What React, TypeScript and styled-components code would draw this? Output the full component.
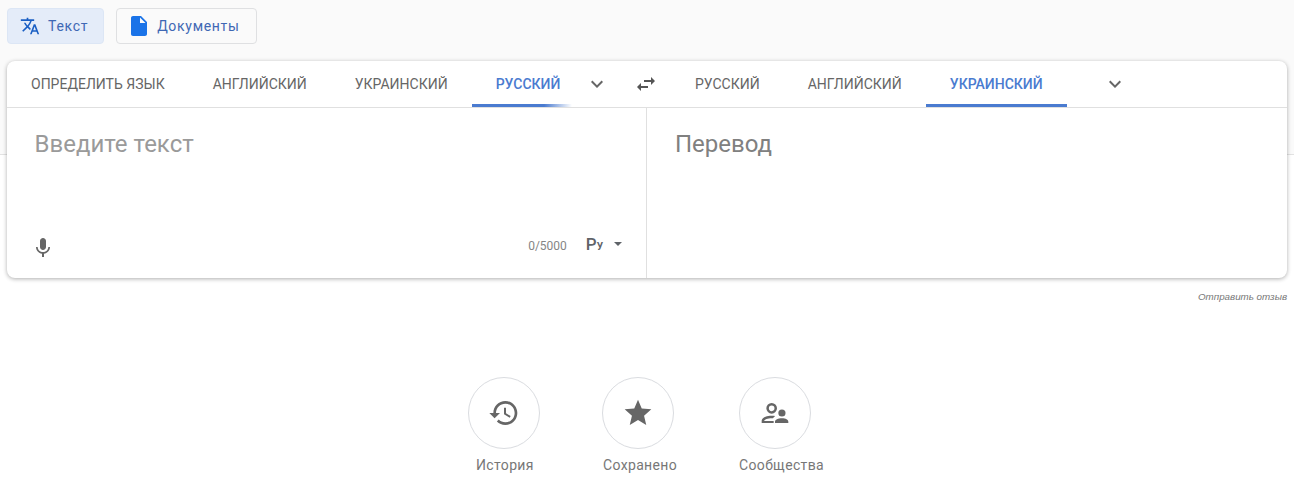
import React from 'react'
import styled, { createGlobalStyle } from 'styled-components'

const GlobalStyle = createGlobalStyle`
  html, body {
    margin: 0;
    padding: 0;
    background: #fff;
    font-family: Roboto, 'Noto Sans', sans-serif;
  }
`

const Icon = ({ d, size = 24, color = '#5f6368' }: { d: string; size?: number; color?: string }) => (
  <svg width={size} height={size} viewBox="0 0 24 24" fill={color}>
    <path d={d} />
  </svg>
)

const paths = {
  translate:
    'M12.87 15.07l-2.54-2.51.03-.03c1.74-1.94 2.98-4.17 3.71-6.53H17V4h-7V2H8v2H1v1.99h11.17C11.5 7.92 10.44 9.75 9 11.35 8.07 10.32 7.3 9.19 6.69 8h-2c.73 1.63 1.73 3.17 2.98 4.56l-5.09 5.02L4 19l5-5 3.11 3.11.76-2.04zM18.5 10h-2L12 22h2l1.12-3h4.75L21 22h2l-4.5-12zm-2.62 7l1.62-4.33L19.12 17h-3.24z',
  file: 'M6 2c-1.1 0-1.99.9-1.99 2L4 20c0 1.1.89 2 1.99 2H18c1.1 0 2-.9 2-2V8l-6-6H6zm7 7V3.5L18.5 9H13z',
  swap: 'M6.99 11L3 15l3.99 4v-3H14v-2H6.99v-3zM21 9l-3.99-4v3H10v2h7.01v3L21 9z',
  expand: 'M16.59 8.59L12 13.17 7.41 8.59 6 10l6 6 6-6z',
  mic: 'M12 14c1.66 0 3-1.34 3-3V5c0-1.66-1.34-3-3-3S9 3.34 9 5v6c0 1.66 1.34 3 3 3zm5.3-3c0 3-2.54 5.1-5.3 5.1S6.7 14 6.7 11H5c0 3.41 2.72 6.23 6 6.72V21h2v-3.28c3.28-.48 6-3.3 6-6.72h-1.7z',
  history:
    'M13 3c-4.97 0-9 4.03-9 9H1l3.89 3.89.07.14L9 12H6c0-3.87 3.13-7 7-7s7 3.13 7 7-3.13 7-7 7c-1.93 0-3.68-.79-4.94-2.06l-1.42 1.42C8.27 19.99 10.51 21 13 21c4.97 0 9-4.03 9-9s-4.03-9-9-9zm-1 5v5l4.28 2.54.72-1.21-3.5-2.08V8H12z',
  star: 'M12 17.27L18.18 21l-1.64-7.03L22 9.24l-7.19-.61L12 2 9.19 8.63 2 9.24l5.46 4.73L5.82 21z',
  community:
    'M9.5 4.5a4 4 0 1 1 0 8 4 4 0 0 1 0-8zm0 1.9a2.1 2.1 0 1 0 0 4.2 2.1 2.1 0 0 0 0-4.2zM2 19.5v-1.7c0-2.3 3.4-3.8 7.5-3.8.9 0 1.8.1 2.6.2l-1.7 1.8c-.3 0-.6-.1-.9-.1-2.9 0-5.6 1-5.6 2v.1h7.1v1.5H2zM17.2 9.3a2.7 2.7 0 1 1 0 5.4 2.7 2.7 0 0 1 0-5.4zM12 19.5v-1c0-1.6 2.3-2.6 5.2-2.6s4.8 1 4.8 2.6v1H12z',
}

const sourceTabs = ['ОПРЕДЕЛИТЬ ЯЗЫК', 'АНГЛИЙСКИЙ', 'УКРАИНСКИЙ', 'РУССКИЙ']
const targetTabs = ['РУССКИЙ', 'АНГЛИЙСКИЙ', 'УКРАИНСКИЙ']

const App = () => {
  return (
    <Page>
      <GlobalStyle />
      <ModeBar>
        <ModeButton $active>
          <Icon d={paths.translate} size={20} color="#1a5fc4" />
          Текст
        </ModeButton>
        <ModeButton>
          <Icon d={paths.file} size={24} color="#1a73e8" />
          Документы
        </ModeButton>
      </ModeBar>

      <Card>
        <LangRow>
          <SourceLangs>
            {sourceTabs.map((t) => (
              <Tab key={t} $active={t === 'РУССКИЙ'} $fade>
                {t}
              </Tab>
            ))}
            <Chevron $left={1}>
              <Icon d={paths.expand} color="#666" />
            </Chevron>
          </SourceLangs>
          <SwapButton>
            <Icon d={paths.swap} color="#555" />
          </SwapButton>
          <TargetLangs>
            {targetTabs.map((t) => (
              <Tab key={t} $active={t === 'УКРАИНСКИЙ'}>
                {t}
              </Tab>
            ))}
            <Chevron $left={36}>
              <Icon d={paths.expand} color="#666" />
            </Chevron>
          </TargetLangs>
        </LangRow>
        <Panels>
          <SourcePanel>
            <Placeholder>Введите текст</Placeholder>
            <SourceFooter>
              <Icon d={paths.mic} color="#666" />
              <FooterRight>
                <Counter>0/5000</Counter>
                <Translit>
                  Р<small>У</small>
                </Translit>
                <Caret />
              </FooterRight>
            </SourceFooter>
          </SourcePanel>
          <TargetPanel>Перевод</TargetPanel>
        </Panels>
      </Card>

      <Feedback>Отправить отзыв</Feedback>

      <Shortcuts>
        <Shortcut $width={72}>
          <Circle>
            <Icon d={paths.history} size={32} color="#666" />
          </Circle>
          <ShortcutLabel $offset={8}>История</ShortcutLabel>
        </Shortcut>
        <Shortcut $width={76}>
          <Circle>
            <Icon d={paths.star} size={32} color="#666" />
          </Circle>
          <ShortcutLabel $offset={1}>Сохранено</ShortcutLabel>
        </Shortcut>
        <Shortcut $width={86}>
          <Circle>
            <Icon d={paths.community} size={32} color="#666" />
          </Circle>
          <ShortcutLabel $offset={0}>Сообщества</ShortcutLabel>
        </Shortcut>
      </Shortcuts>
    </Page>
  )
}

const Page = styled.div`
  width: 1294px;
  height: 488px;
  overflow: hidden;
  box-sizing: border-box;
  padding-top: 8px;
  background: linear-gradient(#fafafa 154px, #e2e2e2 154px, #e2e2e2 155px, #fff 155px);
`

const ModeBar = styled.div`
  display: flex;
  gap: 12px;
  padding-left: 7px;
`

const ModeButton = styled.div<{ $active?: boolean }>`
  display: flex;
  align-items: center;
  gap: ${(props) => (props.$active ? '8px' : '6px')};
  height: 36px;
  box-sizing: border-box;
  padding: ${(props) => (props.$active ? '0 15px 0 12px' : '0 16px 0 10px')};
  border-radius: 4px;
  border: 1px solid ${(props) => (props.$active ? '#dce6f5' : '#dfe0e2')};
  background: ${(props) => (props.$active ? '#e4ecf9' : '#fafafa')};
  color: #3f68b4;
  font-size: 14px;
  font-weight: 400;
  letter-spacing: 0.7px;
`

const Card = styled.div`
  margin: 17px 7px 0;
  height: 217px;
  background: #fff;
  border-radius: 8px;
  box-shadow: 0 1px 4px rgba(0, 0, 0, 0.32);
`

const LangRow = styled.div`
  display: flex;
  height: 47px;
  box-sizing: border-box;
  border-bottom: 1px solid #e0e0e0;
`

const SourceLangs = styled.div`
  display: flex;
  align-items: stretch;
  width: 622px;
`

const TargetLangs = styled.div`
  display: flex;
  align-items: stretch;
`

const Tab = styled.div<{ $active?: boolean; $fade?: boolean }>`
  position: relative;
  display: flex;
  align-items: center;
  height: 46px;
  padding: 0 24px;
  font-size: 14px;
  font-weight: ${(props) => (props.$active ? 500 : 400)};
  color: ${(props) => (props.$active ? '#4a7bd0' : '#666')};
  white-space: nowrap;

  ${(props) =>
    props.$active
      ? `&::after {
          content: '';
          position: absolute;
          left: 0;
          right: ${props.$fade ? '12px' : '0'};
          bottom: 0;
          height: 3px;
          background: ${props.$fade ? 'linear-gradient(90deg, #4a7bd0 72%, rgba(74,123,208,0) 100%)' : '#4a7bd0'};
        }`
      : ''}
`

const Chevron = styled.div<{ $left: number }>`
  display: flex;
  align-items: center;
  margin-left: ${(props) => props.$left}px;
`

const SwapButton = styled.div`
  display: flex;
  align-items: center;
  justify-content: center;
  width: 34px;
  height: 46px;
  margin-right: 8px;
`

const Panels = styled.div`
  display: flex;
  height: 170px;
`

const SourcePanel = styled.div`
  display: flex;
  flex-direction: column;
  justify-content: space-between;
  width: 640px;
  box-sizing: border-box;
  border-right: 1px solid #e0e0e0;
  padding: 20px 24px 16px 24px;
`

const Placeholder = styled.div`
  padding-left: 3.5px;
  font-size: 24px;
  line-height: 32px;
  color: #9a9a9a;
`

const SourceFooter = styled.div`
  display: flex;
  align-items: center;
  justify-content: space-between;
`

const FooterRight = styled.div`
  display: flex;
  align-items: center;
  margin-bottom: 5px;
`

const Counter = styled.span`
  font-size: 12px;
  color: #858585;
`

const Translit = styled.span`
  margin-left: 19px;
  font-size: 17px;
  line-height: 20px;
  font-weight: 500;
  color: #5f6368;

  small {
    font-size: 10px;
    font-weight: 700;
  }
`

const Caret = styled.span`
  width: 0;
  height: 0;
  margin: 0 0 3px 11px;
  border-left: 4px solid transparent;
  border-right: 4px solid transparent;
  border-top: 4px solid #5f6368;
`

const TargetPanel = styled.div`
  flex: 1;
  padding: 20px 0 0 28px;
  font-size: 24px;
  line-height: 32px;
  color: #808080;
`

const Feedback = styled.div`
  margin: 12px 7px 0 0;
  text-align: right;
  font-family: 'Liberation Sans', Arial, sans-serif;
  font-size: 9.8px;
  font-style: italic;
  line-height: 14px;
  color: #777;
`

const Shortcuts = styled.div`
  display: flex;
  gap: 62px;
  margin-top: 73px;
  padding-left: 468px;
`

const Shortcut = styled.div<{ $width: number }>`
  display: flex;
  flex-direction: column;
  align-items: flex-start;
  width: ${(props) => props.$width}px;

  & + & + & {
    margin-left: -1px;
  }
`

const Circle = styled.div`
  display: flex;
  align-items: center;
  justify-content: center;
  width: 72px;
  height: 72px;
  box-sizing: border-box;
  border: 1px solid #dadce0;
  border-radius: 50%;
`

const ShortcutLabel = styled.div<{ $offset: number }>`
  margin: 6px 0 0 ${(props) => props.$offset}px;
  font-size: 14px;
  line-height: 20px;
  color: #777;
  letter-spacing: 0.35px;
  white-space: nowrap;
`

export default App
